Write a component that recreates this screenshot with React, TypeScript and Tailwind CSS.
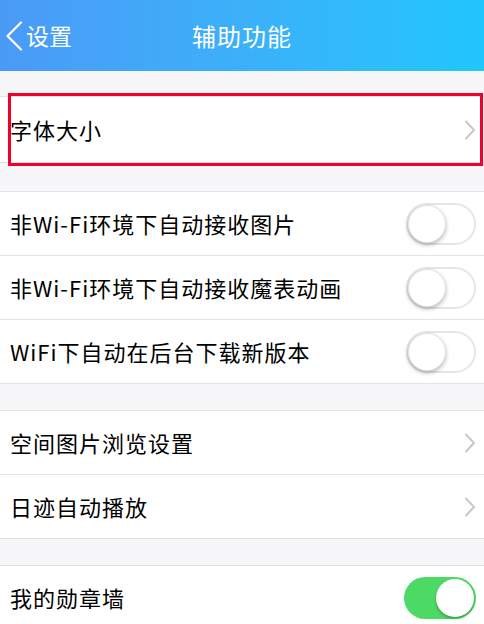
const Chevron = () => (
    <svg width="12" height="20" viewBox="0 0 12 20" className="shrink-0">
        <path d="M2 1.5 L10 10 L2 18.5" fill="none" stroke="#c7c7cc" strokeWidth="2" strokeLinecap="round" strokeLinejoin="round" />
    </svg>
);

const Toggle = ({ on }: { on?: boolean }) =>
    on ? (
        <div className="relative w-[72px] h-[42px] rounded-full bg-[#4cd964] shrink-0">
            <div className="absolute right-[2px] top-[2px] w-[38px] h-[38px] rounded-full bg-white shadow-[0_2px_3px_rgba(0,0,0,0.25)]" />
        </div>
    ) : (
        <div className="relative w-[70px] h-[42px] rounded-full bg-white border-2 border-[#e6e6e6] shrink-0">
            <div className="absolute left-0 top-0 w-[38px] h-[38px] rounded-full bg-white shadow-[0_2px_4px_rgba(0,0,0,0.28)] border border-[#e2e2e2]" />
        </div>
    );

const Row = ({ label, right, last, tall }: { label: string; right: React.ReactNode; last?: boolean; tall?: boolean }) => (
    <div
        className={`flex items-center justify-between pl-[10px] pr-[8px] bg-white ${tall ? "h-[65px]" : last ? "h-[63px]" : "h-[64px] border-b border-[#e3e3e6]"}`}
    >
        <span className="text-[22px] text-black tracking-[1px]">{label}</span>
        {right}
    </div>
);

const Section = ({ children }: { children: React.ReactNode }) => (
    <div className="border-t border-b border-[#e3e3e6] bg-white">{children}</div>
);

const App = () => {
    return (
        <div
            className="w-[484px] h-[624px] overflow-hidden bg-[#f7f7f9]"
            style={{ fontFamily: '"Noto Sans CJK SC", "Noto Sans", sans-serif' }}
        >
            <header className="relative h-[71px] flex items-center bg-gradient-to-r from-[#4a9af6] to-[#1fc6fc] text-white">
                <div className="flex items-center pl-[5px] gap-[3px]">
                    <svg width="18" height="30" viewBox="0 0 18 30">
                        <path d="M16 1.5 L2.5 15 L16 28.5" fill="none" stroke="white" strokeWidth="2.2" strokeLinecap="round" strokeLinejoin="round" />
                    </svg>
                    <span className="text-[23px] leading-none">设置</span>
                </div>
                <h1 className="absolute left-0 right-0 text-center text-[24px] leading-none tracking-[1px] pointer-events-none">辅助功能</h1>
            </header>

            <div className="h-[25px]" />
            <div className="relative">
                <Section>
                    <Row label="字体大小" right={<Chevron />} tall />
                </Section>
                <div className="absolute -top-[3px] -bottom-[3px] left-[8px] right-[1px] border-[3px] border-[#f2002a]" />
            </div>

            <div className="h-[28px]" />
            <Section>
                <Row label="非Wi-Fi环境下自动接收图片" right={<Toggle />} />
                <Row label="非Wi-Fi环境下自动接收魔表动画" right={<Toggle />} />
                <Row label="WiFi下自动在后台下载新版本" right={<Toggle />} last />
            </Section>

            <div className="h-[26px]" />
            <Section>
                <Row label="空间图片浏览设置" right={<Chevron />} />
                <Row label="日迹自动播放" right={<Chevron />} last />
            </Section>

            <div className="h-[26px]" />
            <Section>
                <Row label="我的勋章墙" right={<Toggle on />} last />
            </Section>
        </div>
    );
};

export default App;
